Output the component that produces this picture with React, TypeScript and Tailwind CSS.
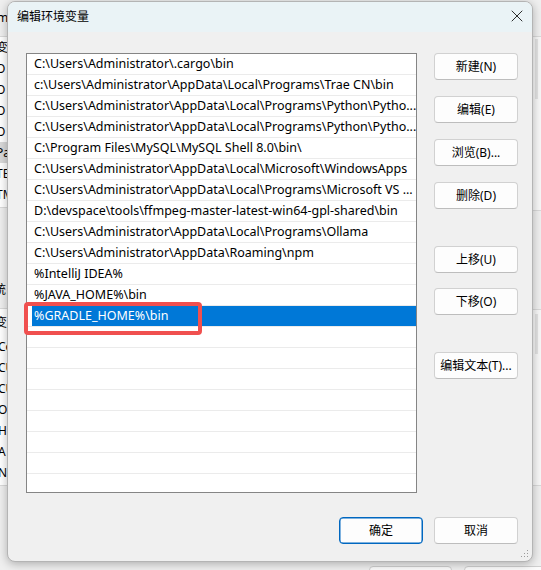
import { X } from 'lucide-react'

const paths = [
  'C:\\Users\\Administrator\\.cargo\\bin',
  'c:\\Users\\Administrator\\AppData\\Local\\Programs\\Trae CN\\bin',
  'C:\\Users\\Administrator\\AppData\\Local\\Programs\\Python\\Pytho...',
  'C:\\Users\\Administrator\\AppData\\Local\\Programs\\Python\\Pytho...',
  'C:\\Program Files\\MySQL\\MySQL Shell 8.0\\bin\\',
  'C:\\Users\\Administrator\\AppData\\Local\\Microsoft\\WindowsApps',
  'C:\\Users\\Administrator\\AppData\\Local\\Programs\\Microsoft VS ...',
  'D:\\devspace\\tools\\ffmpeg-master-latest-win64-gpl-shared\\bin',
  'C:\\Users\\Administrator\\AppData\\Local\\Programs\\Ollama',
  'C:\\Users\\Administrator\\AppData\\Roaming\\npm',
  '%IntelliJ IDEA%',
  '%JAVA_HOME%\\bin',
  '%GRADLE_HOME%\\bin',
]

const selected = 12
const rows = [...paths, ...Array(8).fill('')]

const upperBg = ['变', 'O', 'O', 'O', 'O', 'Pa', 'TE', 'TM']
const lowerBg = ['Co', 'CU', 'CU', 'Or', 'HI', 'A', 'NU']

const font = { fontFamily: '"Noto Sans", "Noto Sans CJK SC", sans-serif' }

function Btn({ label, primary, className = '' }: { label: string; primary?: boolean; className?: string }) {
  return (
    <button
      className={`w-[84px] h-[27px] rounded-[4px] bg-[#fdfdfd] text-[12px] text-black flex items-center justify-center ${
        primary ? 'border border-[#0067c0] shadow-[inset_0_0_0_0.5px_#0067c0]' : 'border border-[#d1d1d1] border-b-[#bdbdbd]'
      } ${className}`}
    >
      {label}
    </button>
  )
}

// the window behind the dialog, only its edges show
function BackgroundWindow() {
  return (
    <>
      <div className="absolute left-0 top-0 w-[7px] h-[36px] overflow-hidden">
        <span className="absolute left-[-3px] top-[9px] text-[12px] text-black">m</span>
      </div>
      <div className="absolute left-0 top-[36px] w-[7px] h-[172px] bg-white border-t border-b border-[#d9d9d9] overflow-hidden flex flex-col">
        {upperBg.map((t, i) => (
          <div
            key={i}
            className={`h-[21px] shrink-0 flex items-center text-[12px] text-black ${t === 'Pa' ? 'bg-[#d9d9d9]' : ''}`}
          >
            <span className="ml-[-4px]">{t}</span>
          </div>
        ))}
      </div>
      <div className="absolute left-0 top-[281px] w-[7px] h-[22px] overflow-hidden text-[12px] text-black">
        <span className="ml-[-6px]">统</span>
      </div>
      <div className="absolute left-0 top-[308px] w-[7px] h-[178px] bg-white border-t border-b border-[#d9d9d9] overflow-hidden flex flex-col">
        <div className="h-[27px] shrink-0 flex items-center text-[12px] text-black">
          <span className="ml-[-5px]">变</span>
        </div>
        {lowerBg.map((t, i) => (
          <div key={i} className="h-[21px] shrink-0 flex items-center text-[12px] text-black">
            <span className="ml-[-2px]">{t}</span>
          </div>
        ))}
      </div>

      <div className="absolute left-[533px] top-[36px] w-[8px] h-[175px] bg-[#f7f7f7] border-t border-b border-[#d9d9d9]">
        <div className="ml-[2px] mt-[2px] w-[3px] h-[60px] bg-[#e2e2e2]" />
      </div>
      <div className="absolute left-[533px] top-[309px] w-[8px] h-[177px] bg-[#f7f7f7] border-t border-b border-[#d9d9d9]">
        <div className="ml-[2px] mt-[4px] w-[3px] h-[40px] bg-[#e2e2e2]" />
      </div>

      <div className="absolute left-[369px] top-[566px] w-[83px] h-[20px] rounded-[4px] border border-[#cfcfcf] bg-[#fbfbfb]" />
      <div className="absolute left-[464px] top-[566px] w-[83px] h-[20px] rounded-[4px] border border-[#cfcfcf] bg-[#fbfbfb]" />
    </>
  )
}

export default function App() {
  return (
    <div className="relative w-[541px] h-[570px] overflow-hidden bg-[#efefef]" style={font}>
      <BackgroundWindow />

      <div className="absolute left-[7px] top-[1px] w-[526px] h-[561px] rounded-[8px] border border-[#b4b4b4] bg-[#f0f0f0] shadow-[0_2px_10px_rgba(0,0,0,0.28)] overflow-hidden flex flex-col">
        {/* title bar */}
        <div className="h-[30px] shrink-0 bg-[#eaf3f6] flex items-center justify-between pl-[9px] pr-[5px]">
          <span className="text-[12px] text-black -mt-[1px]">编辑环境变量</span>
          <X className="w-[20px] h-[20px] text-[#1a1a1a] -mt-[2px]" strokeWidth={1.1} />
        </div>

        {/* body */}
        <div className="flex pl-[18px] pt-[21px] gap-[17px]">
          <div className="w-[391px] h-[440px] border border-[#858585] bg-white overflow-hidden flex flex-col">
            {rows.map((r, i) => (
              <div key={i} className="h-[21px] shrink-0 border-b border-[#ebebeb] flex">
                {i === selected ? (
                  <div className="ml-[5px] flex-1 bg-[#0078d7] text-white text-[12.5px] leading-[20px] pl-[2px] whitespace-nowrap">
                    {r}
                  </div>
                ) : (
                  <div className="flex-1 text-black text-[12.5px] leading-[20px] pl-[7px] whitespace-nowrap overflow-hidden">
                    {r}
                  </div>
                )}
              </div>
            ))}
          </div>

          <div className="flex flex-col">
            <Btn label="新建(N)" />
            <Btn label="编辑(E)" className="mt-[16px]" />
            <Btn label="浏览(B)..." className="mt-[16px]" />
            <Btn label="删除(D)" className="mt-[16px]" />
            <Btn label="上移(U)" className="mt-[37px]" />
            <Btn label="下移(O)" className="mt-[15px]" />
            <Btn label="编辑文本(T)..." className="mt-[37px]" />
          </div>
        </div>

        <div className="flex justify-end gap-[11px] pr-[14px] mt-[24px]">
          <Btn label="确定" primary />
          <Btn label="取消" />
        </div>

        {/* resize grip */}
        <svg className="absolute right-[3px] bottom-[3px]" width="9" height="9" viewBox="0 0 9 9">
          <rect x="7" y="1" width="1" height="1" fill="#9a9a9a" />
          <rect x="4" y="4" width="1" height="1" fill="#9a9a9a" />
          <rect x="7" y="4" width="1" height="1" fill="#9a9a9a" />
          <rect x="1" y="7" width="1" height="1" fill="#9a9a9a" />
          <rect x="4" y="7" width="1" height="1" fill="#9a9a9a" />
          <rect x="7" y="7" width="1" height="1" fill="#9a9a9a" />
        </svg>
      </div>

      {/* annotation box */}
      <div className="absolute left-[24px] top-[302px] w-[178px] h-[33px] border-[4px] border-[#f0504f] rounded-[4px]" />
    </div>
  )
}
